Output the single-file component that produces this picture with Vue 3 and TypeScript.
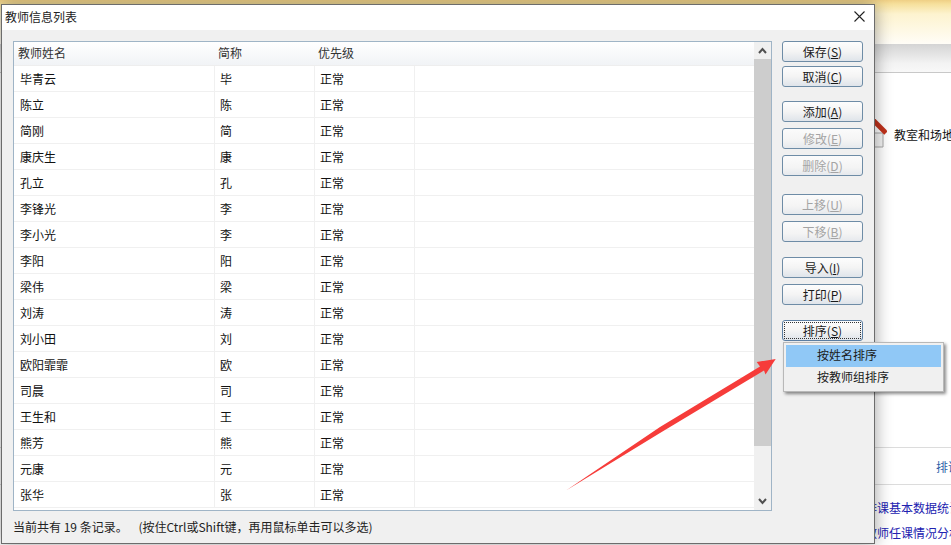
<script setup lang="ts">
const rows: [string, string][] = [
  ['毕青云', '毕'], ['陈立', '陈'], ['简刚', '简'], ['康庆生', '康'], ['孔立', '孔'], ['李锋光', '李'],
  ['李小光', '李'], ['李阳', '阳'], ['梁伟', '梁'], ['刘涛', '涛'], ['刘小田', '刘'], ['欧阳霏霏', '欧'],
  ['司晨', '司'], ['王生和', '王'], ['熊芳', '熊'], ['元康', '元'], ['张华', '张'],
]
const statusText = '当前共有 19 条记录。    (按住Ctrl或Shift键，再用鼠标单击可以多选)'
interface Btn { label: string; key: string; off?: boolean; focus?: boolean }
const groups: { cls: string; items: Btn[] }[] = [
  { cls: 'g-first', items: [{ label: '保存', key: 'S' }, { label: '取消', key: 'C' }] },
  { cls: 'g-a', items: [{ label: '添加', key: 'A' }, { label: '修改', key: 'E', off: true }, { label: '删除', key: 'D', off: true }] },
  { cls: 'g-b', items: [{ label: '上移', key: 'U', off: true }, { label: '下移', key: 'B', off: true }] },
  { cls: 'g-c', items: [{ label: '导入', key: 'I' }, { label: '打印', key: 'P' }] },
  { cls: 'g-c', items: [{ label: '排序', key: 'S', focus: true }] },
]
</script>

<template>
  <div class="page">
    <div class="ribbon"></div>
    <div class="band"></div>
    <div class="content">
      <div class="tool">
        <svg class="pencil" width="14" height="30" viewBox="0 0 14 30">
          <path d="M0 14H10V28H0" fill="#f4f4f4" stroke="#a8a8a8" />
          <path d="M0 1L13 14" stroke="#c0321c" stroke-width="5" fill="none" />
        </svg>
        <span>教室和场地</span>
      </div>
    </div>
    <div class="foot">
      <div class="foot-tab">排课</div>
      <div class="foot-links">
        <div>排课基本数据统计</div>
        <div>教师任课情况分析</div>
      </div>
    </div>

    <section class="dialog">
      <header class="title">
        <span>教师信息列表</span>
        <svg class="close" width="11" height="11" viewBox="0 0 11 11">
          <path d="M0.5 0.5L10.5 10.5M10.5 0.5L0.5 10.5" stroke="#222" stroke-width="1.1" fill="none" />
        </svg>
      </header>
      <div class="client">
        <div class="left">
          <div class="list">
            <div class="table">
              <div class="row head">
                <span>教师姓名</span><span>简称</span><span>优先级</span>
              </div>
              <div v-for="r in rows" :key="r[0]" class="row">
                <span>{{ r[0] }}</span><span>{{ r[1] }}</span><span>正常</span><span></span>
              </div>
            </div>
            <div class="scroll">
              <svg width="17" height="17" viewBox="0 0 17 17">
                <path d="M5 11L8.5 7L12 11" stroke="#505050" stroke-width="2" fill="none" />
              </svg>
              <div class="track"><div class="thumb"></div></div>
              <svg width="17" height="17" viewBox="0 0 17 17">
                <path d="M5 6L8.5 10L12 6" stroke="#505050" stroke-width="2" fill="none" />
              </svg>
            </div>
          </div>
          <div class="status">{{ statusText }}</div>
        </div>
        <div class="buttons">
          <div v-for="(g, i) in groups" :key="i" class="group" :class="g.cls">
            <button
              v-for="b in g.items"
              :key="b.label"
              type="button"
              class="btn"
              :class="{ off: b.off, focus: b.focus }"
            >
              <span class="inner"><span class="label">{{ b.label }}(<u>{{ b.key }}</u>)</span></span>
            </button>
          </div>
        </div>
      </div>
      <div class="menu">
        <div class="item active">按姓名排序</div>
        <div class="item">按教师组排序</div>
      </div>
    </section>

    <svg class="arrow" width="951" height="545" viewBox="0 0 951 545">
      <polygon points="566,490.5 660,427 760,366.5 756.7,362 775.7,359 765.5,374.5 764,370.5 660,433" fill="#f63c3a" />
    </svg>
  </div>
</template>

<style>
html, body { margin: 0; background: #fff; overflow: hidden; }
</style>

<style scoped>
.page {
  position: relative;
  width: 951px;
  height: 545px;
  overflow: hidden;
  display: flex;
  flex-direction: column;
  background: #fff;
  font-family: "Noto Sans CJK SC", "Noto Sans", sans-serif;
  font-size: 12px;
  color: #111;
}
.ribbon {
  height: 44px;
  background: linear-gradient(#efcf85 0, #f6e09c 4px, #fdf3cf 14px, #fffdf7 44px);
}
.band {
  height: 29px;
  background: linear-gradient(#d4d4d4, #f3f3f3 70%, #f8f8f8);
  border-bottom: 1px solid #c8c8c8;
  box-sizing: border-box;
}
.content {
  height: 375px;
  border-bottom: 1px solid #dcdcdc;
  box-sizing: border-box;
  display: flex;
  justify-content: flex-end;
}
.tool {
  width: 78px;
  height: 30px;
  margin-top: 46px;
  display: flex;
  align-items: center;
  gap: 7px;
  white-space: nowrap;
  overflow: hidden;
  flex: none;
}
.pencil { flex: none; }
.foot { flex: 1; }
.foot-tab {
  height: 37px;
  box-sizing: border-box;
  border-bottom: 1px solid #dcdcdc;
  padding: 10px 0 0 936px;
  color: #2f5fa8;
  white-space: nowrap;
  overflow: hidden;
  line-height: 18px;
}
.foot-links {
  padding: 10px 0 0 865px;
  color: #2222b0;
  white-space: nowrap;
  line-height: 25px;
  overflow: hidden;
}
.dialog {
  position: absolute;
  left: 1px;
  top: 4px;
  width: 874px;
  height: 540px;
  box-sizing: border-box;
  border: 1px solid #6c6c6c;
  background: #f0f0f0;
  box-shadow: 0 0 16px rgba(0, 0, 0, 0.38);
  display: flex;
  flex-direction: column;
}
.title {
  height: 25px;
  flex: none;
  background: #fff;
  display: flex;
  align-items: center;
  justify-content: space-between;
  padding: 0 9px 2px 3px;
  box-sizing: border-box;
  color: #222;
}
.close { flex: none; }
.client {
  flex: 1;
  display: flex;
  padding: 11px 11px 0 11px;
  min-height: 0;
}
.left { width: 759px; flex: none; }
.list {
  height: 470px;
  box-sizing: border-box;
  border: 1px solid #9fb4c6;
  background: #fff;
  display: flex;
  overflow: hidden;
}
.table { flex: 1; min-width: 0; }
.row {
  height: 26px;
  box-sizing: border-box;
  display: grid;
  grid-template-columns: 201px 100px 100px 1fr;
  align-items: center;
  border-bottom: 1px solid #f0f0f0;
}
.row span {
  padding-left: 5px;
  height: 100%;
  line-height: 25px;
  border-right: 1px solid #f0f0f0;
  box-sizing: border-box;
  white-space: nowrap;
}
.row span:first-child { padding-left: 6px; }
.row span:last-child { border-right: 0; }
.row.head {
  height: 24px;
  background: linear-gradient(#fff, #f1f3f6);
  border-bottom: 1px solid #eeeeee;
  color: #333;
}
.row.head span {
  padding-left: 3px;
  border-right: 0;
  line-height: 21px;
}
.row.head span:first-child { padding-left: 4px; }
.scroll {
  width: 17px;
  flex: none;
  background: #f0f0f0;
  display: flex;
  flex-direction: column;
}
.scroll svg { flex: none; }
.track { flex: 1; }
.thumb { height: 387px; background: #cdcdcd; }
.status {
  padding-top: 7px;
  color: #222;
  white-space: pre;
  line-height: 18px;
}
.buttons {
  margin-left: 10px;
  width: 81px;
  flex: none;
  display: flex;
  flex-direction: column;
}
.group { display: flex; flex-direction: column; gap: 6px; }
.g-first { gap: 4px; }
.g-a { margin-top: 14px; }
.g-b { margin-top: 18px; }
.g-c { margin-top: 15px; }
.btn {
  width: 81px;
  height: 21px;
  padding: 1px;
  border: 1px solid #6e8ca6;
  border-radius: 3px;
  background: linear-gradient(#fdfdfd, #f4f4f4 50%, #dfe4ea);
  font: inherit;
  color: #1a1a1a;
  display: block;
  box-sizing: border-box;
}
.btn.off { color: #a4a4a4; background: linear-gradient(#fbfbfb, #f4f4f4 60%, #e6e9ed); }
.btn .inner {
  display: flex;
  align-items: center;
  justify-content: center;
  height: 100%;
  line-height: 15px;
}
.btn .label { margin-top: -1px; }
.btn.focus { border-color: #5c7fa3; }
.btn.focus .inner { outline: 1px dotted #333; outline-offset: -1px; }
.menu {
  position: absolute;
  left: 781px;
  top: 337px;
  width: 161px;
  height: 50px;
  box-sizing: border-box;
  padding: 2px;
  background: #f0f0f0;
  border: 1px solid #b8b8b8;
  box-shadow: 2px 2px 3px rgba(0, 0, 0, 0.45);
}
.item {
  height: 22px;
  line-height: 19px;
  padding-left: 31px;
  color: #1a1a1a;
}
.item.active { background: #90c8f6; }
.arrow {
  position: absolute;
  left: 0;
  top: 0;
  pointer-events: none;
}
</style>
